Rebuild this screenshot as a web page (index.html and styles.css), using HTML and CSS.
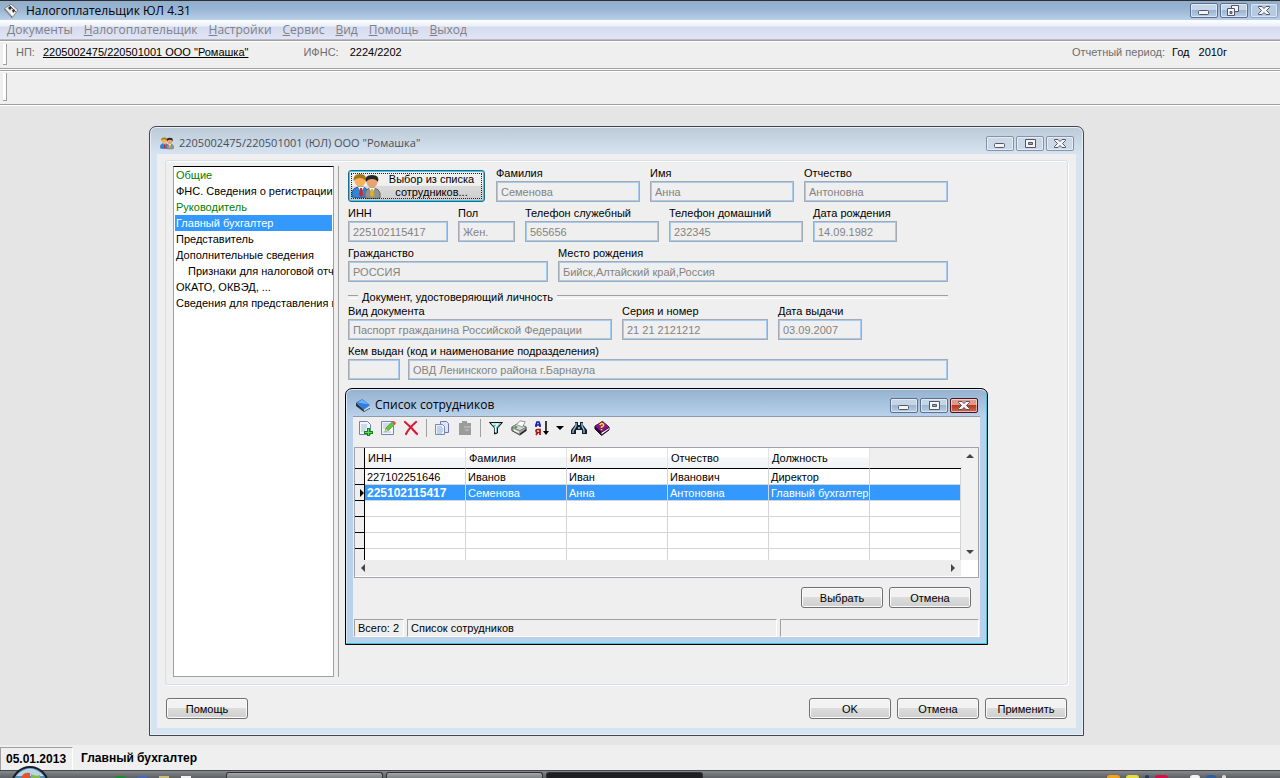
FILE: index.html
```html
<!DOCTYPE html>
<html lang="ru">
<head>
    <meta charset="UTF-8">
    <meta name="viewport" content="width=device-width, initial-scale=1.0">
    <title>Налогоплательщик ЮЛ 4.31</title>
    <link rel="stylesheet" href="styles.css">
</head>
<body>
    <!-- Общие значки -->
    <svg class="defs" width="0" height="0">
        <symbol id="min" viewBox="0 0 26 13"><rect x="7.5" y="6.5" width="10" height="4" rx="1" fill="#f4f4f4" stroke="#535666"/></symbol>
        <symbol id="max" viewBox="0 0 26 13"><path d="M8.500 2.500h10v8h-10z" fill="#f4f4f4" stroke="#535666"/><path d="M11.500 5.500h4v2h-4z" fill="#8fa9c9" stroke="#535666"/></symbol>
        <symbol id="restore" viewBox="0 0 26 13"><path d="M10.500 1.500h7v6h-7z" fill="#f4f4f4" stroke="#535666"/><path d="M6.500 4.500h7v7h-7z" fill="#f4f4f4" stroke="#535666"/><path d="M9 7.500h2v2h-2z" fill="#8fa9c9" stroke="#535666"/></symbol>
        <symbol id="close" viewBox="0 0 26 13"><path d="M7.500 2.500h3.500l2 2 2-2h3.500v1l-3 3 3 3v1H15l-2-2-2 2H7.500v-1l3-3-3-3z" fill="#f4f4f4" stroke="#535666"/></symbol>
        <symbol id="people" viewBox="0 0 30 26">
            <path d="M1 24v-5q1-4 6-5h5q4 1 5 5v5q-8 2-16 0z" fill="#2e86d8" stroke="#1c5ca3"/>
            <path d="M7 14l3 5 3-5z" fill="#fff"/><path d="M9 15h2l1 7-2 2-2-2z" fill="#d22"/>
            <circle cx="9" cy="8" r="5.500" fill="#f6b25f"/><path d="M2.500 8Q2 1 9 1q7 0 6 7-3-3-6-3-4 0-6.500 3z" fill="#a77412"/>
            <path d="M14 25v-5q1-4 5-5h4q5 1 6 5v5q-8 2-15 0z" fill="#929292" stroke="#666"/>
            <path d="M18 15l3 5 3-5z" fill="#fff"/><path d="M20 16h2l1 6-2 2-2-2z" fill="#e8b413"/>
            <circle cx="21" cy="9" r="5.500" fill="#e8a470"/><path d="M15 9Q13 2 21 2q8 0 6 7-2-3-6-3-4 0-6 3z" fill="#262626"/>
        </symbol>
    </svg>

    <header class="titlebar">
        <svg class="app-icon" viewBox="0 0 16 16"><path d="M1 6l7-5 7 6-6 8z" fill="#e9e9e9" stroke="#888"/><path d="M2 6l7 8M6 2l7 7" fill="none" stroke="#666"/><path d="M5 5l2-2 2 2-2 2zM9 7l2-1 1 2-2 2z" fill="#333"/><path d="M8 9l2 3" stroke="#fff" stroke-width="2"/></svg>
        <h1>Налогоплательщик ЮЛ 4.31</h1>
        <div class="win-buttons">
            <button type="button" aria-label="Свернуть"><svg><use href="#min"/></svg></button>
            <button type="button" aria-label="Восстановить"><svg><use href="#restore"/></svg></button>
            <button type="button" class="pale" aria-label="Закрыть"><svg><use href="#close"/></svg></button>
        </div>
    </header>

    <nav class="menu">
        <a href="#"><u>Д</u>окументы</a>
        <a href="#"><u>Н</u>алогоплательщик</a>
        <a href="#"><u>Н</u>астройки</a>
        <a href="#"><u>С</u>ервис</a>
        <a href="#"><u>В</u>ид</a>
        <a href="#"><u>П</u>омощь</a>
        <a href="#"><u>В</u>ыход</a>
    </nav>

    <div class="info-bar">
        <span class="caption">НП:</span>
        <a class="payer" href="#">2205002475/220501001 ООО "Ромашка"</a>
        <span class="caption">ИФНС:</span>
        <span class="ifns">2224/2202</span>
        <span class="caption period">Отчетный период:</span>
        <span>Год</span>
        <span class="year">2010г</span>
    </div>
    <div class="empty-bar"></div>

    <main class="workspace">
        <!-- Карточка организации -->
        <section class="window card">
            <div class="window-title">
                <svg class="title-icon"><use href="#people"/></svg>
                <h2>2205002475/220501001 (ЮЛ) ООО "Ромашка"</h2>
                <div class="win-buttons">
                    <button type="button" aria-label="Свернуть"><svg><use href="#min"/></svg></button>
                    <button type="button" aria-label="Развернуть"><svg><use href="#max"/></svg></button>
                    <button type="button" aria-label="Закрыть"><svg><use href="#close"/></svg></button>
                </div>
            </div>
            <div class="card-body">
                <div class="page">
                    <ul class="sections">
                        <li class="done">Общие</li>
                        <li>ФНС. Сведения о регистрации</li>
                        <li class="done">Руководитель</li>
                        <li class="selected">Главный бухгалтер</li>
                        <li>Представитель</li>
                        <li>Дополнительные сведения</li>
                        <li class="sub">Признаки для налоговой отч</li>
                        <li>ОКАТО, ОКВЭД, ...</li>
                        <li>Сведения для представления в</li>
                    </ul>
                    <form class="person">
                        <div class="row row-name">
                            <button type="button" class="pick">
                                <svg><use href="#people"/></svg>
                                <span>Выбор из списка сотрудников...</span>
                            </button>
                            <div><label for="surname">Фамилия</label><input id="surname" value="Семенова" disabled></div>
                            <div><label for="name">Имя</label><input id="name" value="Анна" disabled></div>
                            <div><label for="patronymic">Отчество</label><input id="patronymic" value="Антоновна" disabled></div>
                        </div>
                        <div class="row row-contacts">
                            <div><label for="inn">ИНН</label><input id="inn" value="225102115417" disabled></div>
                            <div><label for="sex">Пол</label><input id="sex" value="Жен." disabled></div>
                            <div><label for="workPhone">Телефон служебный</label><input id="workPhone" value="565656" disabled></div>
                            <div><label for="homePhone">Телефон домашний</label><input id="homePhone" value="232345" disabled></div>
                            <div><label for="birthDate">Дата рождения</label><input id="birthDate" value="14.09.1982" disabled></div>
                        </div>
                        <div class="row row-birth">
                            <div><label for="country">Гражданство</label><input id="country" value="РОССИЯ" disabled></div>
                            <div><label for="birthPlace">Место рождения</label><input id="birthPlace" value="Бийск,Алтайский край,Россия" disabled></div>
                        </div>
                        <h3>Документ, удостоверяющий личность</h3>
                        <div class="row row-doc">
                            <div><label for="docType">Вид документа</label><input id="docType" value="Паспорт гражданина Российской Федерации" disabled></div>
                            <div><label for="docNumber">Серия и номер</label><input id="docNumber" value="21 21 2121212" disabled></div>
                            <div><label for="docDate">Дата выдачи</label><input id="docDate" value="03.09.2007" disabled></div>
                        </div>
                        <div class="row row-issuer">
                            <div><label for="issuerCode">Кем выдан (код и наименование подразделения)</label><input id="issuerCode" value="" disabled></div>
                            <div><input aria-label="Наименование подразделения" value="ОВД Ленинского района г.Барнаула" disabled></div>
                        </div>
                    </form>
                </div>
                <div class="card-buttons">
                    <button type="button" class="btn help">Помощь</button>
                    <button type="button" class="btn">OK</button>
                    <button type="button" class="btn">Отмена</button>
                    <button type="button" class="btn">Применить</button>
                </div>
            </div>
        </section>

        <!-- Список сотрудников -->
        <section class="window staff">
            <div class="window-title">
                <svg class="title-icon" viewBox="0 0 16 16"><path d="M0 5v4l9 7 7-4V9l-7 4z" fill="#333"/><path d="M9 13l7-4v2l-7 4z" fill="#cfe6ff"/><path d="M0 5l7-4 9 7-7 5z" fill="#2f7fe0"/><path d="M2 5l5-3 7 5z" fill="#70b5fb"/></svg>
                <h2>Список сотрудников</h2>
                <div class="win-buttons">
                    <button type="button" aria-label="Свернуть"><svg><use href="#min"/></svg></button>
                    <button type="button" aria-label="Развернуть"><svg><use href="#max"/></svg></button>
                    <button type="button" class="red" aria-label="Закрыть"><svg><use href="#close"/></svg></button>
                </div>
            </div>
            <div class="staff-body">
                <div class="toolbar">
                    <button type="button" title="Добавить"><svg viewBox="0 0 16 16"><path d="M2.500 1.500h8l3 3v10h-11z" fill="#f3f7fd" stroke="#6f83b6"/><path d="M4 5h6M4 7h6M4 9h5M4 11h4" stroke="#a9bbdc"/><path d="M10 8h3v3h3v3h-3v2h-3v-2H7v-3h3z" fill="#0c8a16"/><path d="M11 9h1v3h3v1h-3v2h-1v-2H8v-1h3z" fill="#5fe25b"/></svg></button>
                    <button type="button" title="Изменить"><svg viewBox="0 0 16 16"><path d="M1.500 1.500h12v13h-12z" fill="#f3f7fd" stroke="#6f83b6"/><path d="M3 4h8M3 6h6M3 8h4M3 12h8" stroke="#a9bbdc"/><path d="M5 12l1-4 6-6 3 2-6 6z" fill="#67c442" stroke="#3a8a24" stroke-width=".6"/><path d="M12 2l2-1 2 2-1 2z" fill="#e5533e"/><path d="M5 12l1-3 2 2z" fill="#f2cf96"/></svg></button>
                    <button type="button" title="Удалить"><svg viewBox="0 0 16 16"><path d="M2 2q6 5 12 12M13 2Q6 8 3 14" fill="none" stroke="#d51c35" stroke-width="2.200" stroke-linecap="round"/></svg></button>
                    <i class="sep"></i>
                    <button type="button" title="Копировать"><svg viewBox="0 0 16 16"><path d="M6.500 1.500h6l2 2v9h-8z" fill="#dfe4f8" stroke="#7577b4"/><path d="M1.500 4.500h7l2 2v8h-9z" fill="#eef4fd" stroke="#7488b9"/><path d="M3 7h5M3 9h6M3 11h6M3 13h5" stroke="#94abd5"/></svg></button>
                    <button type="button" title="Вставить"><svg viewBox="0 0 16 16"><path d="M2 3h3V1h5v2h4v12H2z" fill="#9b9b9b"/><path d="M7 7h7M8 10h4" stroke="#c9c9c9"/></svg></button>
                    <i class="sep"></i>
                    <button type="button" title="Фильтр"><svg viewBox="0 0 16 16"><path d="M1.500 2.500h13L9.500 8v5l-3 1V8z" fill="#5bb9b9" stroke="#111"/><path d="M4 4h6L7.500 7v5" fill="none" stroke="#e8ffff" stroke-width="1.500"/></svg></button>
                    <button type="button" title="Печать"><svg viewBox="0 0 18 16"><path d="M1 7l7-4 9 4v4l-7 5-9-5z" fill="#a3a3a3" stroke="#333"/><path d="M1 7l9 4 7-4-9-4z" fill="#d6d6d6" stroke="#777"/><path d="M6 4l4-4 6 1-3 6z" fill="#fff" stroke="#888"/><path d="M3 9l6 3v2L3 11z" fill="#efefef"/><path d="M4 7h3" stroke="#1cae2a" stroke-width="2"/><path d="M10 15l7-5" stroke="#222" stroke-width="1.500"/></svg></button>
                    <button type="button" title="Сортировка"><svg viewBox="0 0 16 16"><path d="M2 7V5l1-3h2l1 3v2M2 5h4" fill="none" stroke="#1b1ba8" stroke-width="1.700"/><path d="M6 15V9.500H3.500Q2 9.500 2 11q0 1.500 1.500 1.500H6M4 12l-2 3" fill="none" stroke="#a31515" stroke-width="1.700"/><path d="M12 1v12" stroke="#000" stroke-width="1.500"/><path d="M9 11h6l-3 4z"/></svg></button>
                    <button type="button" class="drop" title="Порядок"><svg viewBox="0 0 8 16"><path d="M0 6h8L4 10z"/></svg></button>
                    <button type="button" title="Найти"><svg viewBox="0 0 16 16"><path d="M4 2h3v3h2V2h3v3l4 5v4h-5v-4H5v4H0v-4l4-5z" fill="#14202b"/><path d="M5 3v3l-3 5v2M11 3v3l2 4v3" fill="none" stroke="#9fc2dc" stroke-width="1.300"/><path d="M7 7h2v2H7z" fill="#7fa5c5"/></svg></button>
                    <button type="button" title="Справка"><svg viewBox="0 0 17 16"><path d="M1 6l8-5 7 6v3l-8 6-7-7z" fill="#31083b" stroke="#111"/><path d="M1 6l8-5 7 6-8 5z" fill="#89128f"/><path d="M8 13l8-5v1l-8 6z" fill="#fff"/><path d="M6 5q2-3 4-1 1 2-2 3v1M8 9v1.500" fill="none" stroke="#ffe600" stroke-width="1.700"/></svg></button>
                </div>
                <div class="grid">
                    <table>
                        <thead>
                            <tr><th class="mark"></th><th>ИНН</th><th>Фамилия</th><th>Имя</th><th>Отчество</th><th>Должность</th><th class="rest"></th></tr>
                        </thead>
                        <tbody>
                            <tr><td class="mark"></td><td>227102251646</td><td>Иванов</td><td>Иван</td><td>Иванович</td><td>Директор</td><td></td></tr>
                            <tr class="current"><td class="mark"></td><td>225102115417</td><td>Семенова</td><td>Анна</td><td>Антоновна</td><td>Главный бухгалтер</td><td></td></tr>
                            <tr><td class="mark"></td><td></td><td></td><td></td><td></td><td></td><td></td></tr>
                            <tr><td class="mark"></td><td></td><td></td><td></td><td></td><td></td><td></td></tr>
                            <tr><td class="mark"></td><td></td><td></td><td></td><td></td><td></td><td></td></tr>
                            <tr><td class="mark"></td><td></td><td></td><td></td><td></td><td></td><td></td></tr>
                        </tbody>
                    </table>
                    <div class="scroll-v"><i class="up"></i><i class="down"></i></div>
                    <div class="scroll-h"><i class="left"></i><i class="right"></i></div>
                </div>
                <div class="staff-buttons">
                    <button type="button" class="btn">Выбрать</button>
                    <button type="button" class="btn">Отмена</button>
                </div>
                <div class="staff-status">
                    <span>Всего: 2</span>
                    <span>Список сотрудников</span>
                    <span></span>
                </div>
            </div>
        </section>
    </main>

    <footer class="status">
        <span class="date">05.01.2013</span>
        <span>Главный бухгалтер</span>
    </footer>

    <div class="taskbar">
        <svg class="start" viewBox="0 0 38 12"><circle cx="19" cy="19" r="18" fill="#5d8fb4" stroke="#15202b" stroke-width="2"/><path d="M5 10Q19-5 33 10z" fill="#b9d4e6"/><path d="M10 12q2-6 9-5v5z" fill="#e5532a"/><path d="M20 8q5 3 9 1v3h-9z" fill="#84bd3e"/></svg>
        <div class="quick"><i class="green"></i><i class="blue"></i><i class="sand"></i><i class="white"></i></div>
        <div class="tasks"><i></i><i></i><i class="active"></i></div>
        <div class="tray"><i class="orange"></i><i class="yellow"></i><i class="navy"></i><i class="crimson"></i><i class="gap"></i><i class="white"></i><i class="screen"></i><i class="thin"></i></div>
    </div>
</body>
</html>
```
FILE: styles.css
```css
* {
    box-sizing: border-box;
}

body {
    margin: 0;
    height: 100vh;
    display: flex;
    flex-direction: column;
    overflow: hidden;
    background: #e5e5e5;
    color: #000;
    font: 11px/14px "Liberation Sans", Arial, sans-serif;
}

h1, h2, h3, ul {
    margin: 0;
    padding: 0;
}

h1, h2 {
    font: 12px/16px "Open Sans", "Noto Sans", sans-serif;
}

button, input {
    font: inherit;
    color: inherit;
}

svg {
    display: block;
}

.defs {
    position: absolute;
}

/* Заголовок и меню */
.titlebar {
    display: flex;
    align-items: center;
    height: 20px;
    padding: 0 2px 0 3px;
    border-top: 1px solid #2f2f33;
    background: linear-gradient(#91aecb, #98b4d2 40%, #b8cfe9);
}

.app-icon {
    width: 16px;
    height: 16px;
    margin-right: 7px;
}

.win-buttons {
    display: flex;
    gap: 2px;
    margin-left: auto;
}

.win-buttons button {
    width: 28px;
    height: 15px;
    padding: 0;
    border: 1px solid #5c6f8f;
    border-radius: 2px;
    background: linear-gradient(#c4d5e8 45%, #9db5d0 50%, #b9cfe8);
    box-shadow: inset 0 0 0 1px rgba(255, 255, 255, 0.5);
}

.win-buttons svg {
    width: 26px;
    height: 13px;
}

.win-buttons .pale {
    border-color: #8fa5c2;
    background: #b6cae2;
}

.win-buttons .red {
    border-color: #4c1420;
    background: linear-gradient(#e09a8c 45%, #b83a20 50%, #cf6a50);
}

.menu {
    display: flex;
    gap: 11px;
    height: 20px;
    padding: 2px 7px;
    background: linear-gradient(#fff, #e9eef7 33%, #d5dbee 36%, #e1e5f5);
    border-bottom: 1px solid #b9bac6;
    font: 12px/16px "Open Sans", "Noto Sans", sans-serif;
}

.menu a {
    color: #808088;
    text-decoration: none;
}

.info-bar, .empty-bar {
    position: relative;
    background: #efefef;
    border-top: 1px solid #fff;
    border-bottom: 1px solid #a0a0a0;
}

.info-bar {
    display: flex;
    height: 29px;
    padding: 4px 53px 0 16px;
    border-top-color: #a0a0a0;
    box-shadow: inset 0 1px #fff;
}

.empty-bar {
    height: 36px;
    box-shadow: inset 0 1px #a0a0a0, inset 0 2px #fff;
}

.info-bar::before, .empty-bar::before {
    content: "";
    position: absolute;
    left: 3px;
    top: 3px;
    bottom: 3px;
    width: 3px;
    border: solid #a0a0a0;
    border-width: 0 1px 1px 0;
    background: #fff;
}

.caption {
    color: #6d6d6d;
}

.payer {
    margin: 0 55px 0 8px;
    color: #000;
}

.ifns {
    margin-left: 11px;
}

.period {
    margin: 0 7px 0 auto;
}

.year {
    margin-left: 9px;
}

/* Окна */
.workspace {
    position: relative;
    flex: 1;
    border-top: 1px solid #fff;
}

.window {
    position: absolute;
    display: flex;
    flex-direction: column;
    padding: 0 7px 7px;
    border: 1px solid #45464b;
    border-radius: 7px 7px 0 0;
}

.window-title {
    display: flex;
    align-items: center;
    height: 27px;
    padding: 5px 2px 0 3px;
}

.title-icon {
    width: 14px;
    height: 14px;
    margin-right: 5px;
}

.card {
    left: 149px;
    top: 20px;
    width: 935px;
    height: 610px;
    background: linear-gradient(#bccad8, #d6e3f1 27px);
    box-shadow: inset 0 0 0 1px #e6eef7;
}

.card h2 {
    color: #4a4f57;
    font-size: 11px;
}

.card .win-buttons button {
    border-color: #8592ac;
    background: #cbd8e6;
}

.card-body {
    flex: 1;
    display: flex;
    flex-direction: column;
    padding: 6px 8px 9px;
    background: #efefef;
}

.page {
    flex: 1;
    display: flex;
    padding: 5px 8px 7px 7px;
    border: 1px solid #d5dfe8;
    border-radius: 3px;
    box-shadow: inset 0 1px #fff, 1px 1px #fff;
}

.sections {
    width: 161px;
    padding: 0 1px;
    overflow: hidden;
    list-style: none;
    background: #fff;
    border: 1px solid #a0a0a0;
    border-top-color: #000;
}

.sections li {
    height: 16px;
    padding: 0 1px;
    line-height: 16px;
    white-space: nowrap;
}

.sections .done {
    color: #008000;
}

.sections .selected {
    color: #fff;
    background: #3399ff;
}

.sections .sub {
    padding-left: 13px;
}

.person {
    flex: 1;
    margin-left: 4px;
    padding: 0 111px 0 9px;
    border-left: 1px solid #a0a0a0;
}

.row {
    display: grid;
    gap: 10px;
    height: 40px;
    align-items: end;
}

.row-name {
    grid-template-columns: 138px 1fr 1fr 1fr;
    height: 36px;
}

.row-contacts {
    grid-template-columns: 100px 57px 134px 134px 84px;
}

.row-birth {
    grid-template-columns: 200px 1fr;
}

.row-doc {
    grid-template-columns: 264px 146px 84px;
}

.row-issuer {
    grid-template-columns: 52px 1fr;
    gap: 8px;
}

.row label {
    display: block;
    height: 15px;
    white-space: nowrap;
}

.row input {
    display: block;
    width: 100%;
    height: 21px;
    padding: 0 4px;
    border: 1px solid #a6abb3;
    border-radius: 0;
    background: #efefef;
    box-shadow: inset 0 0 0 1px #a5cbf3;
    color: #838383;
}

.person h3 {
    display: flex;
    align-items: center;
    gap: 4px;
    height: 18px;
    padding-top: 12px;
    font-size: 11px;
    font-weight: normal;
}

.person h3::before, .person h3::after {
    content: "";
    width: 10px;
    height: 2px;
    border-top: 1px solid #a0a0a0;
    border-bottom: 1px solid #fff;
}

.person h3::after {
    flex: 1;
}

.pick {
    display: flex;
    align-items: center;
    height: 32px;
    margin-right: 1px;
    padding: 0 2px;
    border: 1px solid #1f6a86;
    border-radius: 3px;
    background: linear-gradient(#f0f0f0 48%, #dadada 50%, #cdcdcd);
    box-shadow: inset 0 0 0 1px #3fc6ee;
    outline: 1px dotted #222;
    outline-offset: -4px;
    line-height: 13px;
}

.pick svg {
    width: 30px;
    height: 26px;
    flex: none;
}

.pick span {
    flex: 1;
}

.btn {
    width: 82px;
    height: 21px;
    padding: 0;
    border: 1px solid #707070;
    border-radius: 3px;
    background: linear-gradient(#f2f2f2 48%, #dcdcdc 50%, #cfcfcf);
    box-shadow: inset 0 0 0 1px #fafafa;
}

.card-buttons {
    display: flex;
    gap: 6px;
    padding: 13px 1px 0;
}

.help {
    margin-right: auto;
}

/* Окно со списком */
.staff {
    left: 345px;
    top: 282px;
    width: 643px;
    height: 257px;
    border-color: #000;
    background: linear-gradient(#94b1cf, #b9d1ea 27px);
    box-shadow: inset 0 1px #dcebfa, inset -1px -1px #37c6e0, inset 1px 0 #dcebfa;
}

.staff-body {
    flex: 1;
    display: flex;
    flex-direction: column;
    background: #efefef;
    border-top: 1px solid #8f9aa6;
    min-height: 0;
}

.toolbar {
    display: flex;
    align-items: center;
    height: 30px;
    padding-bottom: 8px;
}

.toolbar button {
    display: flex;
    justify-content: center;
    width: 23px;
    height: 22px;
    padding: 3px 0;
    border: 0;
    background: none;
}

.toolbar svg {
    width: 16px;
    height: 16px;
}

.toolbar .drop {
    width: 14px;
}

.toolbar .drop svg {
    width: 8px;
}

.sep {
    width: 1px;
    height: 18px;
    margin: 0 3px 0 4px;
    background: #a0a0a0;
}

.grid {
    display: grid;
    grid-template: 112px 16px / 1fr 17px;
    height: 131px;
    margin: 0 1px;
    padding-bottom: 1px;
    border: 1px solid #a0a4aa;
    background: #fff;
    overflow: hidden;
}

.grid table {
    display: block;
    height: 112px;
    overflow: hidden;
}

.grid thead, .grid tbody {
    display: block;
}

.grid tr {
    display: grid;
    grid-template-columns: 10px repeat(5, 101px) 1fr;
}

.grid th {
    height: 21px;
    padding: 3px 3px 0;
    text-align: left;
    font-weight: normal;
    background: linear-gradient(#fff 45%, #f5f6f8 50%, #f2f3f5);
    border-right: 1px solid #e0e3e7;
    border-bottom: 1px solid #000;
}

.grid td {
    height: 16px;
    padding: 0 2px;
    overflow: hidden;
    white-space: nowrap;
    border: solid #d4d4d8;
    border-width: 0 1px 1px 0;
    line-height: 16px;
}

.grid th.rest {
    background: #efefef;
    border-right: 0;
}

.grid .mark {
    padding: 0;
    background: #efefef;
    border-color: #000;
}

.grid .current td:not(.mark) {
    color: #fff;
    background: #3399ff;
}

.grid .current td:nth-child(2) {
    font-weight: bold;
    font-size: 12px;
}

.current .mark::after {
    content: "";
    display: block;
    margin: 4px 0 0 5px;
    border: 4px solid transparent;
    border-left: 4px solid #000;
    border-right: 0;
}

.scroll-v, .scroll-h {
    display: flex;
    justify-content: space-between;
    background: #ededed;
    padding: 6px;
}

.scroll-v {
    flex-direction: column;
    align-items: center;
    background: #f1f1f1;
}

.scroll-v i, .scroll-h i {
    border: 4px solid transparent;
}

.scroll-v .up {
    border-top: 0;
    border-bottom-color: #444;
}

.scroll-v .down {
    border-bottom: 0;
    border-top-color: #444;
}

.scroll-h {
    align-items: center;
}

.scroll-h .left {
    border-left: 0;
    border-right-color: #444;
}

.scroll-h .right {
    border-right: 0;
    border-left-color: #444;
}

.staff-buttons {
    display: flex;
    justify-content: flex-end;
    gap: 6px;
    padding: 9px 9px 0;
}

.staff-status {
    display: grid;
    grid-template-columns: 50px 1fr 199px;
    gap: 3px;
    margin-top: auto;
    padding: 0 1px;
}

.staff-status span {
    height: 18px;
    padding: 1px 3px;
    white-space: nowrap;
    border: 1px solid #a0a0a0;
    border-right-color: #fff;
    border-bottom-color: #fff;
}

/* Строка состояния и панель задач */
.status {
    display: flex;
    gap: 8px;
    height: 25px;
    padding-top: 2px;
    background: #efefef;
    font-size: 12px;
    font-weight: bold;
    line-height: 22px;
}

.status .date {
    width: 73px;
    padding-left: 5px;
    border: solid #a0a0a0;
    border-width: 1px 0 0 1px;
    border-right: 1px solid #fff;
}

.taskbar {
    position: relative;
    display: flex;
    height: 8px;
    padding-left: 110px;
    border-top: 1px solid #46484b;
    background: linear-gradient(#85898c, #5b5f63);
}

.start {
    position: absolute;
    left: 11px;
    bottom: 0;
    width: 38px;
    height: 12px;
}

.quick, .tray {
    display: flex;
    align-items: flex-end;
    gap: 12px;
}

.quick {
    width: 116px;
    padding-left: 5px;
}

.quick i, .tray i {
    width: 10px;
    height: 2px;
}

.tasks {
    display: flex;
    gap: 3px;
    padding-top: 1px;
}

.tasks i {
    width: 157px;
    border: 1px solid #303236;
    border-bottom: 0;
    border-radius: 3px 3px 0 0;
    background: linear-gradient(#a5a7a9, #7c8083);
}

.tasks .active {
    background: #1d1f22;
}

.tray {
    gap: 6px;
    margin-left: auto;
    padding-right: 54px;
}

.tray i {
    height: 3px;
    border-radius: 4px 4px 0 0;
}

.tray .orange, .tray .yellow, .tray .crimson {
    width: 13px;
}

.green { background: #1e8a2c; }
.blue { background: #4468c0; }
.sand { background: #c9bd7c; }
.white { background: #f3f3f3; }
.orange { background: #f3a01c; }
.yellow { background: #e8dc3c; }
.navy { background: #1c3b68; }
.crimson { background: #d3104a; }
.screen { background: #2c5f9c; }

.tray .navy, .tray .thin {
    width: 4px;
}

.thin { background: #ddd; }
```
